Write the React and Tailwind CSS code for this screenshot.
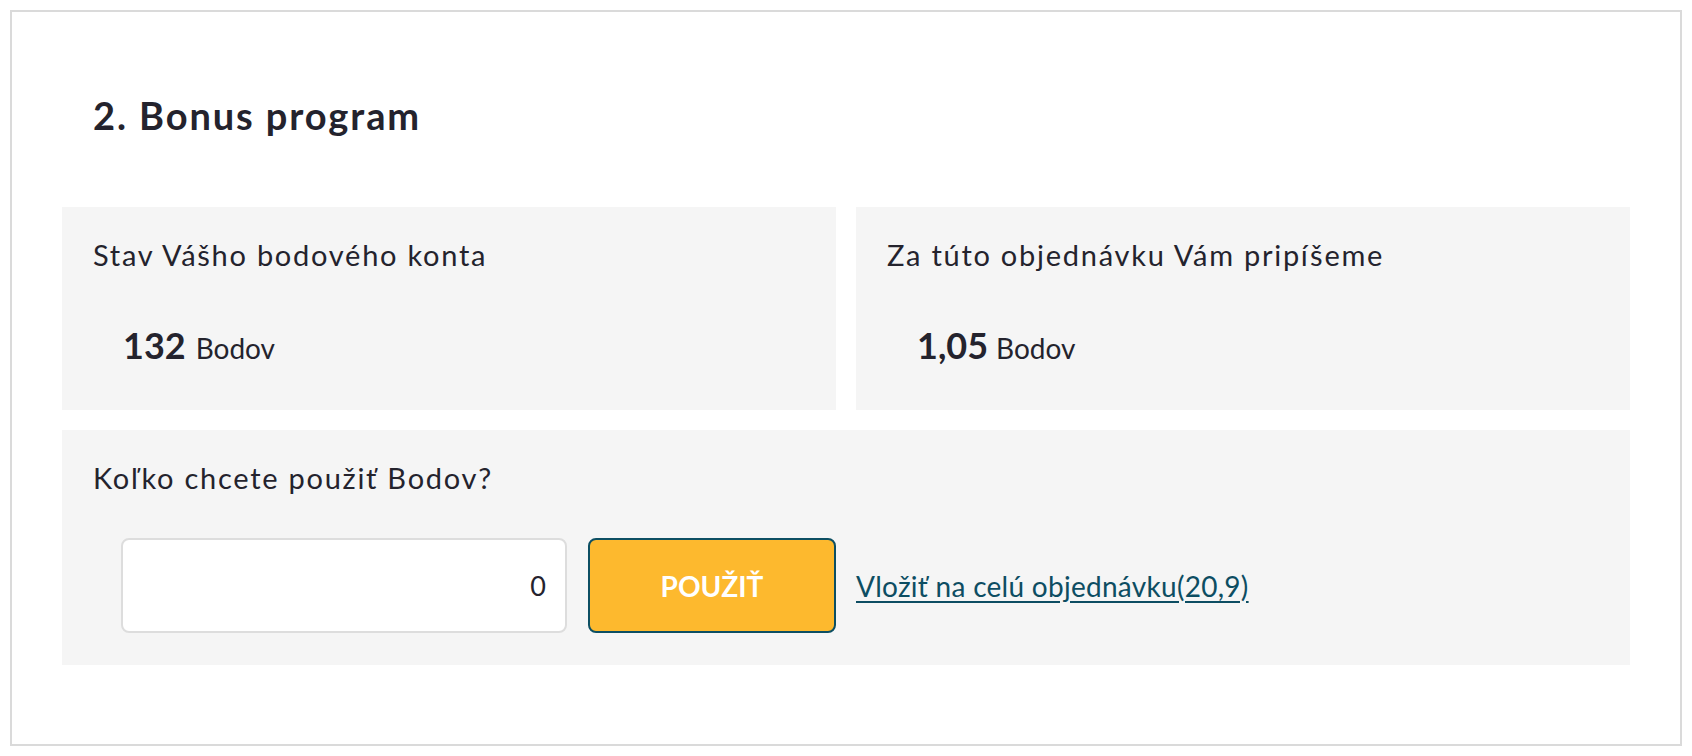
export default function App() {
  const font = { fontFamily: "Lato, 'Noto Sans', sans-serif" };

  return (
    <div className="p-[10px] bg-white min-h-screen" style={font}>
      <div className="w-[1672px] h-[736px] border-2 border-[#dadada] px-[50px] bg-white text-[#24232d]">
        <h2 className="pt-[84px] pl-[31px] text-[38px] leading-none font-bold tracking-[0.05em]">
          2. Bonus program
        </h2>

        <div className="mt-[73px] flex gap-[20px]">
          <div className="w-[774px] h-[203px] bg-[#f5f5f5] pl-[31px] pt-[33px]">
            <p className="text-[29px] leading-none tracking-[0.06em]">Stav Vášho bodového konta</p>
            <div className="mt-[58px] pl-[30px] flex items-baseline gap-[10px]">
              <span className="text-[36px] leading-none font-bold">132</span>
              <span className="text-[28px] leading-none">Bodov</span>
            </div>
          </div>
          <div className="w-[774px] h-[203px] bg-[#f5f5f5] pl-[31px] pt-[33px]">
            <p className="text-[29px] leading-none tracking-[0.06em]">Za túto objednávku Vám pripíšeme</p>
            <div className="mt-[58px] pl-[30px] flex items-baseline gap-[8px]">
              <span className="text-[36px] leading-none font-bold">1,05</span>
              <span className="text-[28px] leading-none">Bodov</span>
            </div>
          </div>
        </div>

        <div className="mt-[20px] h-[235px] bg-[#f5f5f5] pl-[31px] pt-[33px]">
          <p className="text-[29px] leading-none tracking-[0.06em]">Koľko chcete použiť Bodov?</p>
          <div className="mt-[46px] pl-[28px] flex items-center">
            <input
              type="text"
              defaultValue="0"
              className="w-[446px] h-[95px] bg-white border-2 border-[#dddddd] rounded-lg text-right pr-[19px] text-[27px] text-[#24232d] outline-none"
              style={font}
            />
            <button className="ml-[21px] w-[248px] h-[95px] bg-[#fdb92e] border-2 border-[#0d4f63] rounded-lg text-white font-bold text-[28px] leading-none">
              POUŽIŤ
            </button>
            <a
              href="#"
              className="ml-[20px] text-[28px] leading-none tracking-[0.01em] text-[#0d4d62] underline underline-offset-4"
            >
              Vložiť na celú objednávku(20,9)
            </a>
          </div>
        </div>
      </div>
    </div>
  );
}
